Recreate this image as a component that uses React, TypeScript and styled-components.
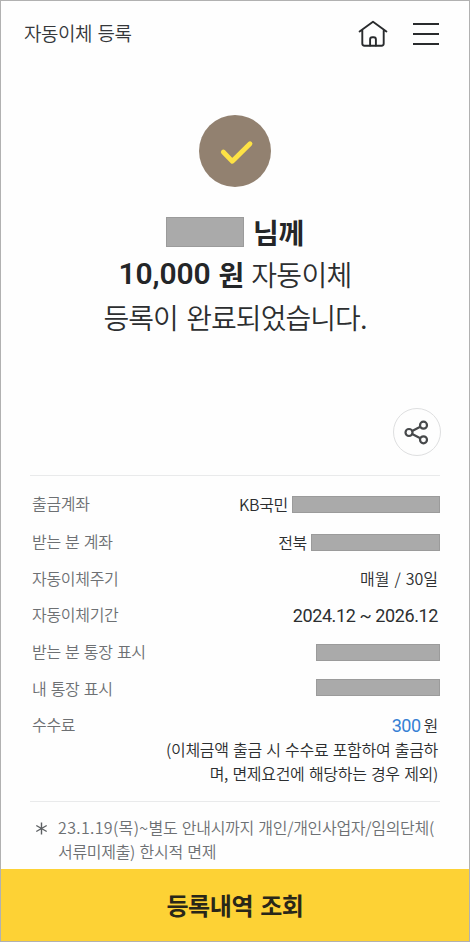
import React from 'react';
import styled, { createGlobalStyle } from 'styled-components';

const GlobalStyle = createGlobalStyle`
  * { box-sizing: border-box; }
  body { margin: 0; background: #fff; }
  button { border: 0; padding: 0; background: none; font: inherit; color: inherit; }
`;

const Screen = styled.main`
  width: 470px;
  height: 942px;
  border: 1px solid #b1b1b1;
  display: flex;
  flex-direction: column;
  overflow: hidden;
  background: #fefefe;
  color: #2c2e30;
  font-family: 'Noto Sans CJK KR', sans-serif;
`;

const Header = styled.header`
  height: 66px;
  flex: none;
  display: flex;
  align-items: center;
  justify-content: space-between;
  padding: 0 30px 0 23px;
`;

const Title = styled.h1`
  margin: 0 0 2px;
  font-size: 19px;
  line-height: 28px;
  font-weight: 350;
  letter-spacing: -0.45px;
  word-spacing: 1.5px;
  color: #35373a;
`;

const HeaderActions = styled.div`
  display: flex;
  align-items: center;
  gap: 25px;
`;

const IconButton = styled.button`
  display: flex;
`;

const Result = styled.section`
  flex: none;
  height: 341px;
  display: flex;
  flex-direction: column;
  align-items: center;
  padding-top: 48px;
`;

const CheckBadge = styled.div`
  width: 72px;
  height: 72px;
  border-radius: 50%;
  background: #928170;
`;

const Message = styled.div`
  margin-top: 23.5px;
  font-size: 28px;
  font-weight: 350;
  line-height: 42.5px;
  text-align: center;
`;

const Line = styled.div<{ $spacing?: number; $wordSpacing?: number }>`
  display: flex;
  justify-content: center;
  align-items: center;
  height: 42.5px;
  white-space: pre;
  letter-spacing: ${(p) => p.$spacing ?? 0}px;
  word-spacing: ${(p) => p.$wordSpacing ?? 0}px;
`;

const Strong = styled.strong`
  font-weight: 700;
  color: #242628;
`;

const Amount = styled.strong`
  font-family: Roboto, 'Noto Sans CJK KR', sans-serif;
  font-weight: 600;
  font-size: 30px;
  letter-spacing: -0.1px;
  color: #242628;
`;

const Mask = styled.span<{ $width: number; $height?: number; $drop?: number }>`
  width: ${(p) => p.$width}px;
  height: ${(p) => p.$height ?? 17}px;
  margin-top: ${(p) => p.$drop ?? 0}px;
  flex: none;
  background: #aaa;
  border: 1px solid #9b9b9b;
`;

const ShareRow = styled.div`
  flex: none;
  display: flex;
  justify-content: flex-end;
  padding-right: 28.5px;
`;

const ShareButton = styled.button`
  width: 48px;
  height: 48px;
  border: 1.5px solid #dedfe0;
  border-radius: 50%;
  display: flex;
  align-items: center;
  justify-content: center;
`;

const Details = styled.dl`
  flex: none;
  height: 327px;
  margin: 19px 29px 0 29px;
  padding: 9px 0 0 2px;
  border-top: 1px solid #e9eaeb;
  border-bottom: 1px solid #e9eaeb;
`;

const Row = styled.div<{ $height?: number }>`
  display: flex;
  justify-content: space-between;
  height: ${(p) => p.$height ?? 36.7}px;
`;

const Label = styled.dt`
  font-size: 16px;
  line-height: 37px;
  font-weight: 350;
  letter-spacing: -0.3px;
  word-spacing: 1px;
  color: #6d7073;
`;

const Value = styled.dd<{ $inset?: boolean; $spacing?: number }>`
  margin: 0;
  display: flex;
  align-items: center;
  height: 37px;
  padding-right: ${(p) => (p.$inset ? 2 : 0)}px;
  font-size: 16px;
  font-weight: 350;
  letter-spacing: ${(p) => p.$spacing ?? -0.3}px;
  word-spacing: 1.4px;
  white-space: pre;
`;

const Institution = styled.span`
  margin-right: 4px;
`;

const Period = styled.span`
  margin-top: 2px;
  font-family: Roboto, sans-serif;
  font-size: 18px;
  font-weight: 400;
  letter-spacing: -0.4px;
  word-spacing: 0;
`;

const Fee = styled.span`
  margin: 2px 3px 0 0;
  font-family: Roboto, sans-serif;
  font-size: 18px;
  font-weight: 400;
  letter-spacing: -0.5px;
  color: #3580d4;
`;

const FeeNote = styled.p`
  margin: 0;
  padding-right: 2px;
  text-align: right;
  font-size: 16px;
  line-height: 24px;
  font-weight: 350;
  letter-spacing: -0.3px;
  word-spacing: 1.1px;
  white-space: nowrap;
`;

const Notice = styled.section`
  flex: 1;
  display: grid;
  grid-template-columns: 23px 1fr;
  align-content: start;
  padding: 13px 0 0 34px;
  color: #6d7073;
  font-size: 16px;
  line-height: 24px;
  font-weight: 350;
  letter-spacing: -0.3px;
  word-spacing: 1.2px;
  white-space: nowrap;
`;

const StartDate = styled.span`
  letter-spacing: 0.35px;
`;

const Marker = styled.svg`
  margin-top: 7px;
`;

const ConfirmButton = styled.button`
  height: 72px;
  flex: none;
  && {
    background: #fdd235;
    color: #292719;
    font-size: 24px;
    line-height: 36px;
    font-weight: 700;
    letter-spacing: -0.4px;
    word-spacing: 2px;
    padding-bottom: 1px;
  }
`;

export default function App() {
  return (
    <>
      <GlobalStyle />
      <Screen>
        <Header>
          <Title>자동이체 등록</Title>
          <HeaderActions>
            <IconButton aria-label="홈">
              <svg width="30" height="28" viewBox="0 0 30 28" fill="none" stroke="#292b2d" strokeWidth="1.9" strokeLinecap="round" strokeLinejoin="round">
                <path d="M1.6 11.4 15 1.8l13.4 9.6M4.3 10v13.6q0 2.2 2.2 2.2h17q2.2 0 2.2-2.2V10" />
                <path d="M12.1 25.6v-6.2q0-2.2 2.2-2.2h1.4q2.2 0 2.2 2.2v6.2" />
              </svg>
            </IconButton>
            <IconButton aria-label="메뉴">
              <svg width="26" height="24" viewBox="0 0 26 24" stroke="#292b2d" strokeWidth="2">
                <path d="M0 2h26M0 12h26M0 22h26" />
              </svg>
            </IconButton>
          </HeaderActions>
        </Header>
        <Result>
          <CheckBadge>
            <svg width="72" height="72" viewBox="0 0 72 72" fill="none" stroke="#fde245" strokeWidth="4.8" strokeLinecap="round" strokeLinejoin="round">
              <path d="m24.3 37 9 9.3L51 28.8" />
            </svg>
          </CheckBadge>
          <Message>
            <Line $spacing={-0.4} $wordSpacing={3}>
              <Mask $width={78} $height={30} />
              <Strong> 님께</Strong>
            </Line>
            <Line $spacing={-0.7} $wordSpacing={2.2}>
              <Amount>10,000</Amount>
              <Strong> 원</Strong> 자동이체
            </Line>
            <Line $spacing={-0.95} $wordSpacing={3}>등록이 완료되었습니다.</Line>
          </Message>
        </Result>
        <ShareRow>
          <ShareButton aria-label="공유">
            <svg width="26" height="26" viewBox="0 0 26 26" fill="none" stroke="#47494b" strokeWidth="2.2">
              <circle cx="5" cy="13.5" r="3.5" />
              <circle cx="19.5" cy="6.2" r="3.5" />
              <circle cx="19.5" cy="20.8" r="3.5" />
              <path d="m8.2 11.9 8.1-4.2M8.2 15.1l8.1 4.2" />
            </svg>
          </ShareButton>
        </ShareRow>
        <Details>
          <Row $height={38}>
            <Label>출금계좌</Label>
            <Value><Institution>KB국민</Institution><Mask $width={148} $drop={2} /></Value>
          </Row>
          <Row>
            <Label>받는 분 계좌</Label>
            <Value><Institution>전북</Institution><Mask $width={129} $drop={2} /></Value>
          </Row>
          <Row>
            <Label>자동이체주기</Label>
            <Value $inset $spacing={0}>매월 / 30일</Value>
          </Row>
          <Row>
            <Label>자동이체기간</Label>
            <Value $inset><Period>2024.12 ~ 2026.12</Period></Value>
          </Row>
          <Row>
            <Label>받는 분 통장 표시</Label>
            <Value><Mask $width={124} $drop={1} /></Value>
          </Row>
          <Row>
            <Label>내 통장 표시</Label>
            <Value><Mask $width={124} $drop={-1} /></Value>
          </Row>
          <Row $height={31}>
            <Label>수수료</Label>
            <Value $inset><Fee>300</Fee>원</Value>
          </Row>
          <FeeNote>(이체금액 출금 시 수수료 포함하여 출금하</FeeNote>
          <FeeNote>며, 면제요건에 해당하는 경우 제외)</FeeNote>
        </Details>
        <Notice>
          <Marker width="13" height="13" viewBox="0 0 13 13" stroke="#5d6063" strokeWidth="1.4">
            <path d="M6.5.5v12M1.3 3.5l10.4 6M11.7 3.5l-10.4 6" />
          </Marker>
          <div>
            <StartDate>23.1.19(목)~</StartDate>별도 안내시까지 개인/개인사업자/임의단체(<br />
            서류미제출) 한시적 면제
          </div>
        </Notice>
        <ConfirmButton>등록내역 조회</ConfirmButton>
      </Screen>
    </>
  );
}
